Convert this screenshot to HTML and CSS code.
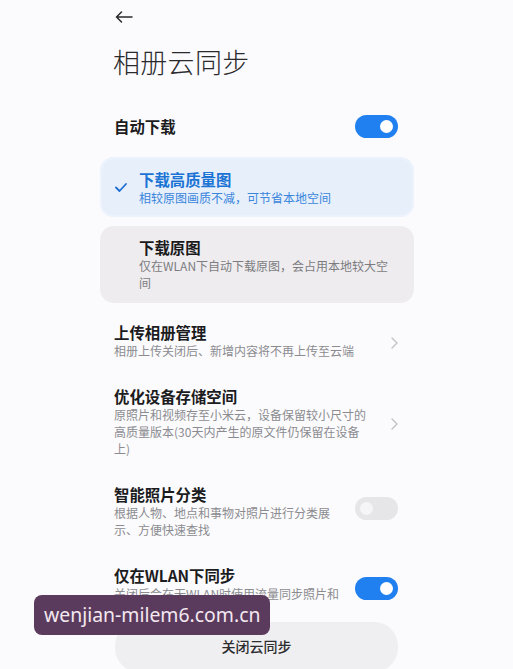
FILE: index.html
```html
<!DOCTYPE html>
<html lang="zh-CN">
<head>
<meta charset="utf-8">
<title>相册云同步</title>
<link rel="stylesheet" href="styles.css">
</head>
<body>
<div class="page">
  <div class="topbar">
    <svg class="back" width="18" height="12" viewBox="0 0 18 12"><path d="M17 6H1.5M6.5 1L1.5 6l5 5" fill="none" stroke="#2a2a2a" stroke-width="1.5" stroke-linecap="round" stroke-linejoin="round"/></svg>
  </div>
  <h1 class="title">相册云同步</h1>

  <div class="row row-head">
    <div class="row-text"><div class="row-title">自动下载</div></div>
    <span class="toggle on"><span class="knob"></span></span>
  </div>

  <div class="options">
    <div class="option selected">
      <svg class="check" width="12" height="9" viewBox="0 0 12 9"><path d="M1 4.5l3.5 3.5L11 1" fill="none" stroke="#1f6fd2" stroke-width="1.8" stroke-linecap="round" stroke-linejoin="round"/></svg>
      <div class="option-text">
        <div class="option-title">下载高质量图</div>
        <div class="option-sub">相较原图画质不减，可节省本地空间</div>
      </div>
    </div>
    <div class="option">
      <div class="option-text">
        <div class="option-title">下载原图</div>
        <div class="option-sub">仅在WLAN下自动下载原图，会占用本地较大空<br>间</div>
      </div>
    </div>
  </div>

  <div class="list">
    <div class="row">
      <div class="row-text">
        <div class="row-title">上传相册管理</div>
        <div class="row-sub">相册上传关闭后、新增内容将不再上传至云端</div>
      </div>
      <svg class="chev" width="7" height="12" viewBox="0 0 7 12"><path d="M1 1l5 5-5 5" fill="none" stroke="#c2c2c6" stroke-width="1.4" stroke-linecap="round" stroke-linejoin="round"/></svg>
    </div>
    <div class="row">
      <div class="row-text">
        <div class="row-title">优化设备存储空间</div>
        <div class="row-sub">原照片和视频存至小米云，设备保留较小尺寸的<br>高质量版本(30天内产生的原文件仍保留在设备<br>上)</div>
      </div>
      <svg class="chev" width="7" height="12" viewBox="0 0 7 12"><path d="M1 1l5 5-5 5" fill="none" stroke="#c2c2c6" stroke-width="1.4" stroke-linecap="round" stroke-linejoin="round"/></svg>
    </div>
    <div class="row">
      <div class="row-text">
        <div class="row-title">智能照片分类</div>
        <div class="row-sub">根据人物、地点和事物对照片进行分类展<br>示、方便快速查找</div>
      </div>
      <span class="toggle off"><span class="knob"></span></span>
    </div>
    <div class="row row-last">
      <div class="row-text">
        <div class="row-title">仅在WLAN下同步</div>
        <div class="row-sub">关闭后会在无WLAN时使用流量同步照片和<br>切换</div>
      </div>
      <span class="toggle on"><span class="knob"></span></span>
    </div>
  </div>

  <div class="close-btn">关闭云同步</div>
</div>
<div class="watermark">wenjian-milem6.com.cn</div>
</body>
</html>
```
FILE: styles.css
```css
* { box-sizing: border-box; }
html, body {
  margin: 0;
  padding: 0;
  background: #fbfbfd;
}
body {
  font-family: "Noto Sans CJK SC", "Noto Sans", sans-serif;
  color: #1c1c1e;
  height: 669px;
  overflow: hidden;
  position: relative;
}
.page {
  padding: 0 114px 0 114px;
}
.topbar {
  height: 32px;
  display: flex;
  align-items: center;
}
.back { margin-left: 1px; margin-top: 1px; }
.title {
  margin: 10px 0 0 -1px;
  font-size: 27px;
  line-height: 40px;
  font-weight: 300;
  color: #2a2a2c;
  letter-spacing: 0.3px;
}
.row {
  display: flex;
  align-items: center;
  justify-content: space-between;
  padding: 14px 0;
}
.row-head {
  height: 46px;
  padding: 0;
  margin-top: 21px;
}
.row-text { flex: 1; }
.row-title {
  font-size: 15.4px;
  line-height: 19px;
  font-weight: 700;
  color: #1c1c1e;
}
.row-sub {
  font-size: 12px;
  line-height: 17px;
  color: #8b8b90;
}
.row-last { padding-bottom: 3px; }
.chev { margin-right: 1px; margin-top: 4px; }

.toggle {
  position: relative;
  width: 43px;
  height: 23px;
  border-radius: 12px;
  flex: none;
  margin-right: 1px;
}
.toggle.on { background: #2080f0; }
.toggle.off { background: #e6e6e9; margin-top: -6px; }
.toggle .knob {
  position: absolute;
  top: 5px;
  width: 13px;
  height: 13px;
  border-radius: 50%;
  background: #ffffff;
}
.toggle.on .knob { right: 5px; }
.toggle.off .knob { left: 5px; background: #f5f5f7; }
.row-last .toggle { margin-top: -8px; }

.options {
  margin: 8px -15px 0 -14px;
  display: flex;
  flex-direction: column;
  gap: 9px;
}
.option {
  display: flex;
  align-items: center;
  border-radius: 14px;
  background: #eeecef;
  padding: 11px 8px 12px 39px;
  position: relative;
}
.option.selected {
  background: #e7effb;
  box-shadow: inset 0 0 0 2px #edf3fd;
  padding: 12px 8px 11px 39px;
}
.check {
  position: absolute;
  left: 15px;
  top: 26px;
}
.option-title {
  font-size: 15.4px;
  line-height: 20px;
  font-weight: 700;
  color: #1a1a1c;
}
.option-sub {
  font-size: 12px;
  line-height: 17px;
  color: #7c7c80;
}
.selected .option-title { color: #1b74d4; }
.selected .option-sub { color: #3a86dc; }

.list { margin-top: 6px; }

.close-btn {
  margin: 0 1px 0 1px;
  height: 50px;
  border-radius: 24px;
  background: #efeef1;
  display: flex;
  align-items: center;
  justify-content: center;
  font-size: 14px;
  font-weight: 500;
  color: #2c2c2e;
  padding-bottom: 2px;
}

.watermark {
  position: absolute;
  left: 34px;
  top: 595px;
  width: 236px;
  height: 40px;
  border-radius: 8px;
  background: #5b3b5d;
  color: #f3e8f0;
  font-family: "Noto Sans", "DejaVu Sans", sans-serif;
  font-size: 19.4px;
  line-height: 40px;
  padding-left: 10px;
  white-space: nowrap;
}
```
